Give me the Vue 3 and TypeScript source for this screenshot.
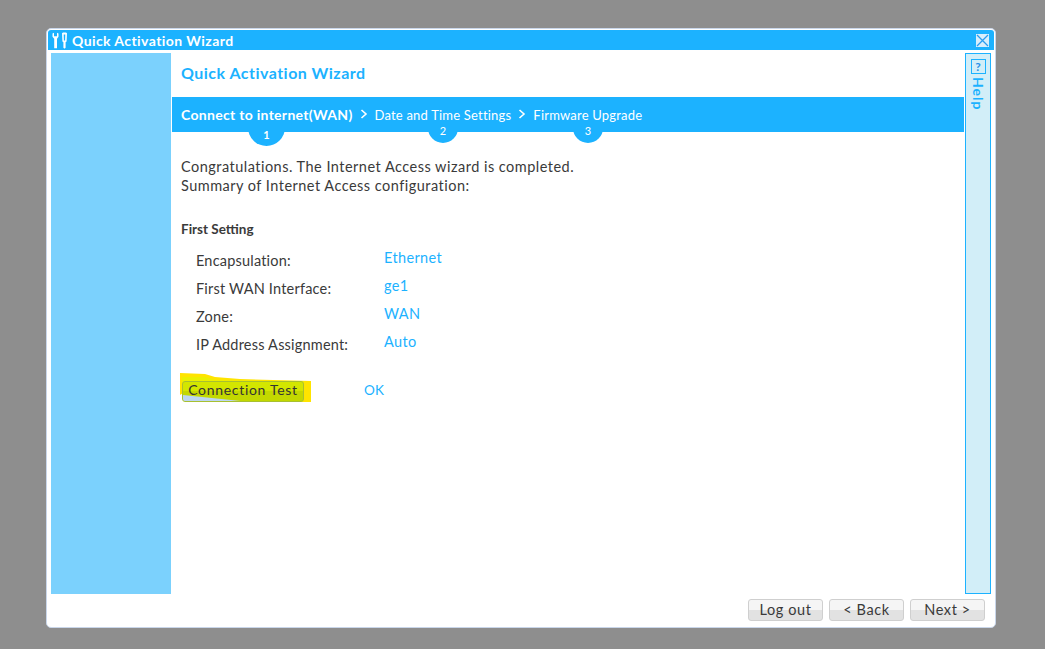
<script setup lang="ts">
const rows: { label: string; value: string }[] = [
  { label: 'Encapsulation:', value: 'Ethernet' },
  { label: 'First WAN Interface:', value: 'ge1' },
  { label: 'Zone:', value: 'WAN' },
  { label: 'IP Address Assignment:', value: 'Auto' },
]
</script>

<template>
  <div class="page">
    <div class="window">
      <header class="titlebar">
        <svg class="tools" width="19" height="17" viewBox="0 0 19 17" fill="#fff">
          <path d="M1.500 1.500 3 .8V4.200h3V.8l1.500.7v3.300L6 6.800V16.200H3.200V6.800L1.500 4.800z" />
          <path fill-rule="evenodd" d="M11 1.200 12 .5h3l1 .7-.4 8.300-1 .7v5.500l-.8.800h-.6l-.8-.8v-5.500l-1-.7zM12.700 2.500l.2 6h1.200l.2-6z" />
        </svg>
        <span class="title-text">Quick Activation Wizard</span>
        <span class="close">
          <svg width="13" height="13" viewBox="0 0 13 13" fill="none" stroke="#2a9df0" stroke-width="1.300">
            <path d="M1 1l11 11M12 1L1 12" />
          </svg>
        </span>
      </header>
      <div class="content">
        <aside class="sidebar"></aside>
        <main class="main">
          <h1 class="heading">Quick Activation Wizard</h1>
          <div class="steps">
            <span class="dot dot-one"><i>1</i></span>
            <span class="dot dot-two"><i>2</i></span>
            <span class="dot dot-three"><i>3</i></span>
            <div class="bar">
              <b class="current">Connect to internet(WAN)</b>
              <svg class="chev" width="8" height="10" viewBox="0 0 8 10" fill="none" stroke="#fff" stroke-width="1.600">
                <path d="M1.500 1l4.500 4-4.500 4" />
              </svg>
              <span class="step">Date and Time Settings</span>
              <svg class="chev" width="8" height="10" viewBox="0 0 8 10" fill="none" stroke="#fff" stroke-width="1.600">
                <path d="M1.500 1l4.500 4-4.500 4" />
              </svg>
              <span class="step">Firmware Upgrade</span>
            </div>
          </div>
          <div class="body">
            <p class="intro">Congratulations. The Internet Access wizard is completed.<br />Summary of Internet Access configuration:</p>
            <h2 class="sub">First Setting</h2>
            <div class="grid">
              <template v-for="r in rows" :key="r.label">
                <span class="label">{{ r.label }}</span>
                <span class="value">{{ r.value }}</span>
              </template>
            </div>
            <div class="test-row">
              <div class="marker">
                <svg class="stroke" width="132" height="30" viewBox="0 0 132 30">
                  <path fill="#ffe400" d="M1 0 26 1 36 4 61 6 132 8V29H71L26 22 4 20 1 22z" />
                  <path fill="#ecf000" d="M3 4 26 4 36 7 125 8.500V10H3z" />
                </svg>
                <button class="test-btn" type="button"><span class="corner"></span><span class="test-label">Connection Test</span></button>
              </div>
              <span class="ok">OK</span>
            </div>
          </div>
        </main>
        <aside class="help">
          <span class="help-box">?</span>
          <span class="help-text">Help</span>
        </aside>
      </div>
      <footer class="footer">
        <button class="btn" type="button">Log out</button>
        <button class="btn" type="button">&lt; Back</button>
        <button class="btn" type="button">Next &gt;</button>
      </footer>
    </div>
  </div>
</template>

<style>
html, body { margin: 0; background: #8e8e8e; }
</style>

<style scoped>
.page {
  width: 1045px;
  height: 649px;
  box-sizing: border-box;
  padding: 28px 49px 21px 46px;
  background: #8e8e8e;
  font-family: "Lato", "Open Sans", sans-serif;
  font-size: 14.500px;
  color: #3a3a3a;
  overflow: hidden;
}
.window {
  height: 600px;
  box-sizing: border-box;
  background: #fff;
  border: 1px solid #c9d6ea;
  border-radius: 5px;
  padding: 1px;
  display: flex;
  flex-direction: column;
}
.titlebar {
  height: 20px;
  flex: none;
  background: #1cb2ff;
  color: #fff;
  display: flex;
  align-items: center;
  padding: 0 5px 0 3px;
  border-radius: 3px 3px 0 0;
}
.tools { flex: none; margin-right: 2px; }
.title-text {
  font-size: 14px;
  font-weight: 700;
  letter-spacing: 0.42px;
}
.close {
  margin-left: auto;
  width: 13px;
  height: 13px;
  background: #d8eefb;
  display: flex;
}
.content {
  flex: 0 0 541px;
  display: flex;
  padding: 3px 3px 0 3px;
  box-sizing: content-box;
  height: 541px;
}
.sidebar {
  width: 120px;
  flex: none;
  background: #7bd1fd;
}
.main {
  flex: 1;
  min-width: 0;
  padding-left: 1px;
  display: flex;
  flex-direction: column;
}
.heading {
  margin: 0;
  height: 44px;
  box-sizing: border-box;
  padding: 9px 0 0 9px;
  font-size: 16px;
  font-weight: 700;
  line-height: 22px;
  letter-spacing: 0.48px;
  color: #1cb2ff;
}
.steps {
  position: relative;
  height: 50px;
  flex: none;
}
.bar {
  position: relative;
  z-index: 1;
  height: 35px;
  background: #1cb2ff;
  color: #fff;
  display: flex;
  align-items: center;
  padding-left: 9px;
  font-size: 13px;
  letter-spacing: 0.2px;
}
.current {
  font-size: 14px;
  font-weight: 700;
  letter-spacing: 0.3px;
  margin-top: -1px;
}
.chev { flex: none; margin: -1px 7px 0 7px; }
.step { margin-top: 1px; }
.dot {
  position: absolute;
  border-radius: 50%;
  background: #1cb2ff;
  color: #fff;
  font-size: 11px;
  text-align: center;
}
.dot i {
  font-style: normal;
  position: absolute;
  z-index: 2;
  left: 0;
  right: 0;
  line-height: 12px;
}
.dot-one { left: 76px; top: 12px; width: 37px; height: 37px; }
.dot-one i { top: 20px; font-weight: 700; }
.dot-two { left: 256px; top: 16px; width: 30px; height: 30px; }
.dot-three { left: 401px; top: 16px; width: 30px; height: 30px; }
.dot-two i, .dot-three i { top: 12px; }
.body { padding: 10px 0 0 9px; }
.intro {
  margin: 0;
  line-height: 19px;
  letter-spacing: 0.48px;
}
.sub {
  margin: 25px 0 0;
  font-size: 13.500px;
  font-weight: 700;
  line-height: 19px;
}
.grid {
  display: grid;
  grid-template-columns: 188px auto;
  grid-auto-rows: 28px;
  justify-content: start;
  margin: 6px 0 0 15px;
  letter-spacing: 0.2px;
}
.label { line-height: 32px; }
.value { color: #1cb2ff; line-height: 26px; letter-spacing: 0.35px; }
.test-row {
  display: flex;
  align-items: center;
  margin: 16px 0 0 -2px;
  height: 30px;
}
.marker {
  position: relative;
  width: 132px;
  height: 30px;
  flex: none;
  padding: 8px 0 0 3px;
  box-sizing: border-box;
}
.stroke { position: absolute; left: 0; top: 0; }
.test-btn {
  position: relative;
  display: block;
  width: 122px;
  height: 21px;
  padding: 0 0 4px;
  border: 1px solid #a8c030;
  border-radius: 3px;
  background: linear-gradient(#d3e600 0 50%, #c3d800 50%);
  color: #333;
  font: inherit;
  font-size: 14px;
  letter-spacing: 0.7px;
  line-height: 15px;
  overflow: hidden;
}
.corner {
  position: absolute;
  inset: 0;
  background: #bcd6f2;
  clip-path: polygon(0 68%, 48% 100%, 0 100%);
}
.test-label { position: relative; }
.ok {
  margin: 4px 0 0 53px;
  color: #1cb2ff;
  font-size: 13.500px;
  letter-spacing: 0.3px;
}
.help {
  width: 26px;
  margin-left: 1px;
  flex: none;
  box-sizing: border-box;
  background: #d2eef8;
  border: 1px solid #1cb2ff;
  display: flex;
  flex-direction: column;
  align-items: center;
  padding-top: 5px;
}
.help-box {
  width: 15px;
  height: 15px;
  box-sizing: border-box;
  border: 1px solid #1cb2ff;
  color: #2a8fe8;
  font-size: 12px;
  line-height: 13px;
  text-align: center;
  font-weight: 700;
}
.help-text {
  writing-mode: vertical-rl;
  margin-top: 3px;
  color: #1cb2ff;
  font-weight: 700;
  font-size: 14px;
  letter-spacing: 1px;
}
.footer {
  flex: none;
  display: flex;
  justify-content: flex-end;
  gap: 6px;
  padding: 5px 9px 0 0;
}
.btn {
  width: 75px;
  height: 22px;
  padding: 0;
  border: 1px solid #cfcfcf;
  border-radius: 3px;
  background: linear-gradient(#f5f5f5 0 50%, #e2e2e2 50%);
  color: #3a3a3a;
  font: inherit;
  letter-spacing: 0.6px;
  line-height: 20px;
}
</style>
